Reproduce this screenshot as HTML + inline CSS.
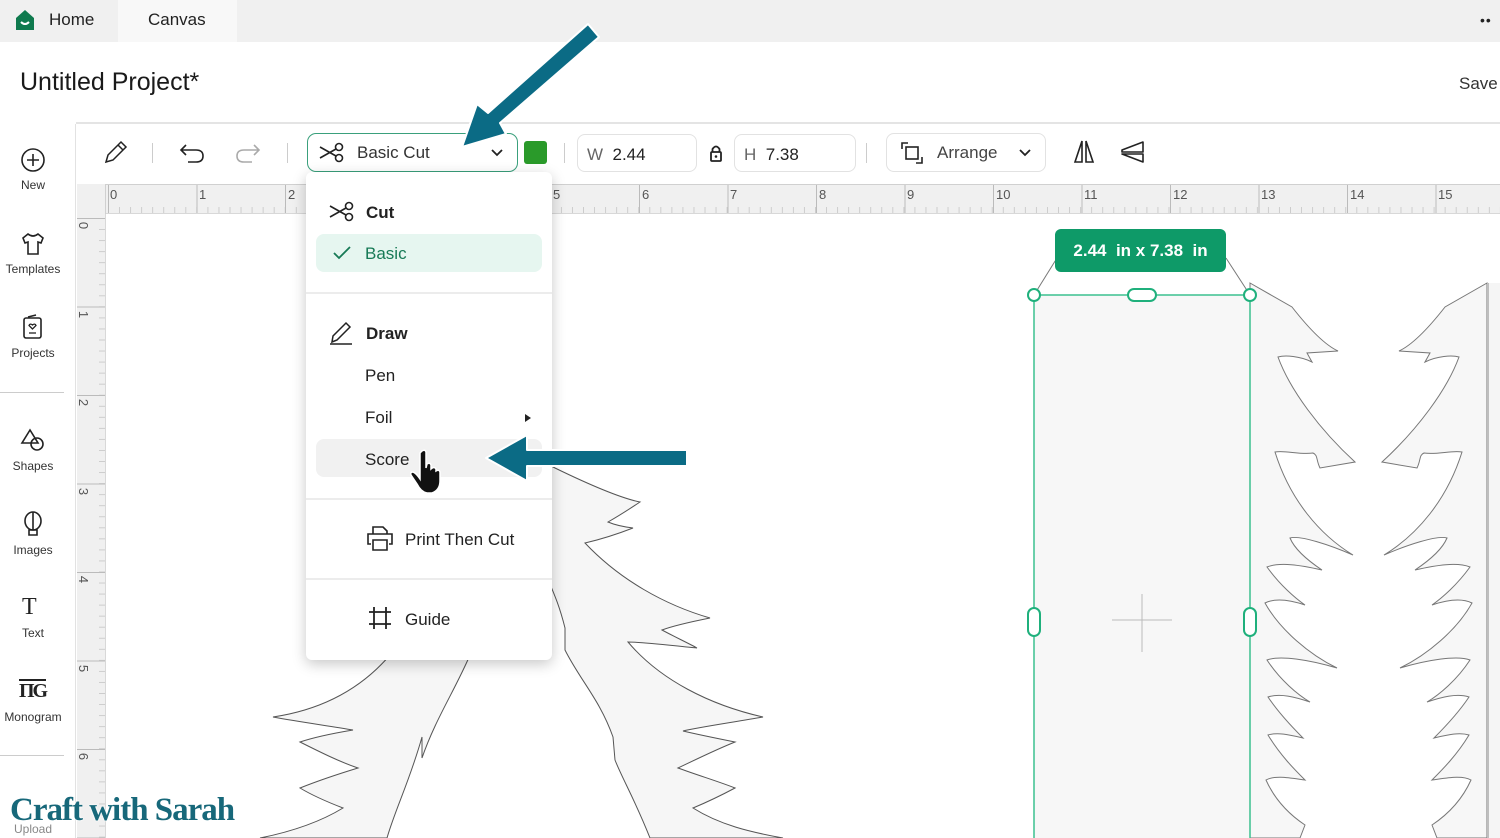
<!DOCTYPE html>
<html><head><meta charset="utf-8"><style>
*{margin:0;padding:0;box-sizing:border-box}
body{width:1500px;height:838px;overflow:hidden;background:#fff;font-family:"Liberation Sans",sans-serif;color:#222;position:relative}
.a{position:absolute}
.tabbar{left:0;top:0;width:1500px;height:42px;background:#f0f0f0}
.sb{left:0;top:124px;width:76px;height:714px;background:#fff;border-right:1px solid #e2e2e2}
.sbi{position:absolute;left:0;width:66px;text-align:center;font-size:12px;color:#333}
.tb{font-size:17px;color:#333}
.menu{left:306px;top:172px;width:246px;height:488px;background:#fff;border-radius:6px;box-shadow:0 4px 14px rgba(0,0,0,.22)}
.mi{position:absolute;font-size:17px;color:#222}
.hr{position:absolute;left:0;width:246px;height:2px;background:#ececec}
</style></head><body>
<!-- canvas drawing -->
<svg class="a" style="left:0;top:0" width="1500" height="838" viewBox="0 0 1500 838">
<rect x="1034" y="295" width="216" height="543" fill="#f7f7f7"/>
<path d="M1250,283 L1292,307 C1310,330 1325,345 1338,351 L1307,353 L1312,362 C1300,356 1285,355 1278,357 C1290,390 1320,430 1355,462 L1320,468 C1316,460 1318,455 1313,453 C1300,455 1285,450 1275,452 C1290,500 1320,535 1353,555 C1330,545 1300,535 1290,538 C1295,550 1310,562 1322,570 C1300,565 1280,562 1267,567 C1280,585 1295,598 1305,605 C1290,600 1275,598 1265,603 C1280,630 1310,655 1337,668 C1310,660 1280,655 1267,660 C1280,680 1298,695 1310,702 C1295,697 1280,693 1268,697 C1280,715 1295,730 1303,738 C1290,735 1278,732 1268,735 C1280,755 1295,770 1305,780 C1290,778 1275,775 1266,780 C1275,800 1290,815 1305,825 L1300,838 L1250,838 Z" fill="#f7f7f7" stroke="#777" stroke-width="1"/>
<path d="M1487,283 L1445,307 C1427,330 1412,345 1399,351 L1430,353 L1425,362 C1437,356 1452,355 1459,357 C1447,390 1417,430 1382,462 L1417,468 C1421,460 1419,455 1424,453 C1437,455 1452,450 1462,452 C1447,500 1417,535 1384,555 C1407,545 1437,535 1447,538 C1442,550 1427,562 1415,570 C1437,565 1457,562 1470,567 C1457,585 1442,598 1432,605 C1447,600 1462,598 1472,603 C1457,630 1427,655 1400,668 C1427,660 1457,655 1470,660 C1457,680 1439,695 1427,702 C1442,697 1457,693 1469,697 C1457,715 1442,730 1434,738 C1447,735 1459,732 1469,735 C1457,755 1442,770 1432,780 C1447,778 1462,775 1471,780 C1462,800 1447,815 1432,825 L1437,838 L1487,838 Z" fill="#f7f7f7" stroke="#777" stroke-width="1"/>
<rect x="1487" y="283" width="13" height="555" fill="#f5f5f5"/>
<line x1="1488" y1="283" x2="1488" y2="838" stroke="#888"/>
<line x1="1034" y1="295" x2="1057" y2="258" stroke="#777"/>
<line x1="1250" y1="295" x2="1226" y2="258" stroke="#777"/>
<rect x="1034" y="295" width="216" height="560" fill="none" stroke="#3cc08f" stroke-width="1.5"/>
<line x1="1112" y1="620" x2="1172" y2="620" stroke="#bbb"/>
<line x1="1142" y1="594" x2="1142" y2="652" stroke="#bbb"/>
<g fill="#fff" stroke="#1fb07c" stroke-width="2">
<circle cx="1034" cy="295" r="6"/><circle cx="1250" cy="295" r="6"/>
<rect x="1128" y="289" width="28" height="12" rx="6"/>
<rect x="1028" y="608" width="12" height="28" rx="6"/><rect x="1244" y="608" width="12" height="28" rx="6"/>
</g>
<g fill="#f6f6f6" stroke="#555" stroke-width="1">
<path d="M390,655 C360,690 320,710 273,717 C300,722 330,726 353,730 C335,733 315,737 300,742 C320,752 340,762 358,768 C335,775 315,782 300,788 C315,797 330,803 343,808 C320,822 290,832 260,838 L387,838 C395,810 410,780 422,737 L422,758 C435,720 455,690 470,655 Z"/>
<path d="M540,460 L555,468 C590,485 620,498 640,502 C628,510 615,518 608,522 C615,525 625,527 633,528 C615,535 598,540 585,543 C620,580 665,605 710,618 C690,622 670,627 662,630 C675,637 688,643 697,648 C675,646 645,642 628,642 C660,680 710,705 763,717 C735,722 700,727 683,731 C700,735 720,739 735,742 C715,750 695,760 678,768 C700,776 720,782 735,788 C720,796 705,803 693,808 C720,825 750,832 783,838 L650,838 C635,800 622,778 615,760 L613,737 C600,700 580,680 565,650 L565,628 C558,600 552,590 540,560 Z"/>
</g>
</svg>

<div class="a tabbar"></div>
<div class="a" style="left:0;top:0;width:117px;height:42px;background:#f0f0f0"></div>
<div class="a" style="left:118px;top:0;width:119px;height:42px;background:#f8f8f8"></div>
<svg class="a" style="left:14px;top:9px" width="22" height="22" viewBox="0 0 22 22"><path d="M2,9 L11,1 L20,9 L20,21 L2,21 Z" fill="#0f7a4e"/><path d="M7,13 Q11,17 15,13" stroke="#fff" stroke-width="2" fill="none"/></svg>
<div class="a" style="left:49px;top:10px;font-size:17px;color:#222">Home</div>
<div class="a" style="left:148px;top:10px;font-size:17px;color:#222">Canvas</div>
<div class="a" style="left:1480px;top:12px;font-size:14px;letter-spacing:1px">••</div>
<div class="a" style="left:20px;top:68px;font-size:25px;color:#1a1a1a">Untitled Project*</div>
<div class="a" style="left:1459px;top:74px;font-size:17px;color:#333">Save</div>
<div class="a" style="left:76px;top:122px;width:1424px;height:2px;background:#e4e4e4"></div>

<div class="a sb"></div>
<svg class="a" style="left:20px;top:147px" width="26" height="26"><circle cx="13" cy="13" r="11" fill="none" stroke="#222" stroke-width="1.6"/><path d="M13,7V19M7,13H19" stroke="#222" stroke-width="1.6"/></svg>
<div class="sbi" style="top:178px">New</div>
<svg class="a" style="left:20px;top:231px" width="26" height="26"><path d="M8,3 L3,7 L5,12 L8,11 L8,23 L18,23 L18,11 L21,12 L23,7 L18,3 Q13,7 8,3Z" fill="none" stroke="#222" stroke-width="1.6"/></svg>
<div class="sbi" style="top:262px">Templates</div>
<svg class="a" style="left:22px;top:314px" width="22" height="26"><rect x="2" y="4" width="17" height="20" rx="2" fill="none" stroke="#222" stroke-width="1.6"/><path d="M6,3L14,1" stroke="#222" stroke-width="1.6"/><path d="M10.5,15 L7,11.5 Q8,9 10.5,11 Q13,9 14,11.5Z" fill="none" stroke="#222" stroke-width="1.3"/><path d="M7,19H14" stroke="#222" stroke-width="1.3"/></svg>
<div class="sbi" style="top:346px">Projects</div>
<div class="a" style="left:0;top:392px;width:64px;height:1px;background:#ccc"></div>
<svg class="a" style="left:20px;top:427px" width="26" height="26"><path d="M10,3 L2,16 L18,16 Z" fill="none" stroke="#222" stroke-width="1.6"/><circle cx="17" cy="17" r="6" fill="none" stroke="#222" stroke-width="1.6"/></svg>
<div class="sbi" style="top:459px">Shapes</div>
<svg class="a" style="left:22px;top:511px" width="22" height="26"><ellipse cx="11" cy="10" rx="8" ry="9" fill="none" stroke="#222" stroke-width="1.6"/><path d="M11,1V19M7,19H15V24H7Z" fill="none" stroke="#222" stroke-width="1.6"/></svg>
<div class="sbi" style="top:543px">Images</div>
<div class="a" style="left:22px;top:594px;font-family:'Liberation Serif',serif;font-size:24px;color:#222">T</div>
<div class="sbi" style="top:626px">Text</div>
<div class="a" style="left:19px;top:679px;font-family:'Liberation Serif',serif;font-size:20px;font-weight:bold;letter-spacing:-2px;border-top:2px solid #222;line-height:20px">ΠG</div>
<div class="sbi" style="top:710px">Monogram</div>
<div class="a" style="left:0;top:755px;width:64px;height:1px;background:#ccc"></div>
<div class="sbi" style="top:822px;color:#888">Upload</div>

<svg class="a" style="left:102px;top:140px" width="26" height="26"><path d="M4,22 L6,15 L19,2 L24,7 L11,20 Z M16,5 L21,10" fill="none" stroke="#222" stroke-width="1.5"/></svg>
<div class="a" style="left:152px;top:143px;width:1px;height:20px;background:#ccc"></div>
<svg class="a" style="left:178px;top:141px" width="28" height="24"><path d="M8,4 L3,9 L8,14 M3,9 H18 Q25,9 25,15 Q25,21 18,21 H10" fill="none" stroke="#222" stroke-width="1.6"/></svg>
<svg class="a" style="left:234px;top:141px" width="28" height="24"><path d="M20,4 L25,9 L20,14 M25,9 H10 Q3,9 3,15 Q3,21 10,21 H18" fill="none" stroke="#aaa" stroke-width="1.6"/></svg>
<div class="a" style="left:287px;top:143px;width:1px;height:20px;background:#ccc"></div>
<div class="a" style="left:307px;top:133px;width:211px;height:39px;border:1.5px solid #3aa07c;border-radius:9px;background:#fff"></div>
<svg class="a" style="left:318px;top:142px" width="28" height="22"><circle cx="21" cy="5" r="3.5" fill="none" stroke="#222" stroke-width="1.6"/><circle cx="21" cy="16" r="3.5" fill="none" stroke="#222" stroke-width="1.6"/><path d="M2,5 L18,14 M2,16 L18,7" stroke="#222" stroke-width="1.6"/></svg>
<div class="a tb" style="left:357px;top:143px">Basic Cut</div>
<svg class="a" style="left:490px;top:148px" width="14" height="10"><path d="M2,2 L7,7 L12,2" fill="none" stroke="#222" stroke-width="1.8"/></svg>
<div class="a" style="left:524px;top:141px;width:23px;height:23px;background:#2a9a2a;border-radius:3px"></div>
<div class="a" style="left:564px;top:143px;width:1px;height:20px;background:#ccc"></div>
<div class="a" style="left:577px;top:134px;width:120px;height:38px;border:1px solid #e2e2e2;border-radius:8px"></div>
<div class="a tb" style="left:587px;top:145px;color:#666">W&nbsp;&nbsp;<span style="color:#222">2.44</span></div>
<svg class="a" style="left:709px;top:144px" width="14" height="18"><path d="M3.5,8 V5 Q7,0 10.5,5 V8" fill="none" stroke="#222" stroke-width="1.8"/><rect x="2" y="8" width="10" height="9" rx="1" fill="none" stroke="#222" stroke-width="1.8"/><circle cx="7" cy="12.5" r="1.3" fill="#222"/></svg>
<div class="a" style="left:734px;top:134px;width:122px;height:38px;border:1px solid #e2e2e2;border-radius:8px"></div>
<div class="a tb" style="left:744px;top:145px;color:#666">H&nbsp;&nbsp;<span style="color:#222">7.38</span></div>
<div class="a" style="left:866px;top:143px;width:1px;height:20px;background:#ccc"></div>
<div class="a" style="left:886px;top:133px;width:160px;height:39px;border:1px solid #e2e2e2;border-radius:8px"></div>
<svg class="a" style="left:900px;top:141px" width="24" height="24"><path d="M2,8 V2 H8 M16,22 H22 V16" fill="none" stroke="#222" stroke-width="1.6"/><rect x="6" y="6" width="12" height="12" fill="none" stroke="#222" stroke-width="1.6"/></svg>
<div class="a tb" style="left:937px;top:143px;color:#444">Arrange</div>
<svg class="a" style="left:1018px;top:148px" width="14" height="10"><path d="M2,2 L7,7 L12,2" fill="none" stroke="#222" stroke-width="1.8"/></svg>
<svg class="a" style="left:1072px;top:139px" width="24" height="26"><path d="M10,2 L3,23 H10Z M14,2 L21,23 H14Z" fill="none" stroke="#222" stroke-width="1.6"/></svg>
<svg class="a" style="left:1120px;top:140px" width="26" height="24"><path d="M23,2 L2,10 V12 H23Z M23,22 L2,14 H23Z" fill="none" stroke="#222" stroke-width="1.6" stroke-linejoin="round"/></svg>

<div class="a" style="left:77px;top:184px;width:1423px;height:30px;background-color:#f0f0f0;border-top:1px solid #d0d0d0;border-bottom:1px solid #d8d8d8;
background-image:linear-gradient(90deg,#bbb 1px,transparent 1px),linear-gradient(90deg,#ccc 1px,transparent 1px);
background-size:88.5px 100%,11.06px 6px;background-position:31px 0,31px 22px;background-repeat:repeat-x,repeat-x"></div>
<div class="a" style="left:77px;top:214px;width:29px;height:624px;background-color:#f0f0f0;border-right:1px solid #d8d8d8;
background-image:linear-gradient(180deg,#bbb 1px,transparent 1px),linear-gradient(180deg,#ccc 1px,transparent 1px);
background-size:100% 88.5px,6px 11.06px;background-position:0 4px,22px 4px;background-repeat:repeat-y,repeat-y"></div>
<div class="a" style="left:77px;top:184px;width:29px;height:30px;background:#f0f0f0;border-right:1px solid #d0d0d0"></div>
<div class="a" style="left:110px;top:187px;font-size:13px;color:#555">
<span class="a" style="left:0">0</span><span class="a" style="left:89px">1</span><span class="a" style="left:178px">2</span><span class="a" style="left:443px">5</span><span class="a" style="left:532px">6</span><span class="a" style="left:620px">7</span><span class="a" style="left:709px">8</span><span class="a" style="left:797px">9</span><span class="a" style="left:886px">10</span><span class="a" style="left:974px">11</span><span class="a" style="left:1063px">12</span><span class="a" style="left:1151px">13</span><span class="a" style="left:1240px">14</span><span class="a" style="left:1328px">15</span></div>
<div class="a" style="left:80px;top:218px;font-size:13px;color:#555">
<span class="a" style="top:0;transform:rotate(90deg)">0</span><span class="a" style="top:89px;transform:rotate(90deg)">1</span><span class="a" style="top:177px;transform:rotate(90deg)">2</span><span class="a" style="top:266px;transform:rotate(90deg)">3</span><span class="a" style="top:354px;transform:rotate(90deg)">4</span><span class="a" style="top:443px;transform:rotate(90deg)">5</span><span class="a" style="top:531px;transform:rotate(90deg)">6</span></div>

<div class="a menu">
<svg class="a" style="left:22px;top:29px" width="28" height="22"><circle cx="21" cy="5" r="3.5" fill="none" stroke="#222" stroke-width="1.6"/><circle cx="21" cy="16" r="3.5" fill="none" stroke="#222" stroke-width="1.6"/><path d="M2,5 L18,14 M2,16 L18,7" stroke="#222" stroke-width="1.6"/></svg>
<div class="mi" style="left:60px;top:31px;font-weight:bold">Cut</div>
<div class="a" style="left:10px;top:62px;width:226px;height:38px;background:#e6f6f0;border-radius:8px"></div>
<svg class="a" style="left:26px;top:73px" width="20" height="16"><path d="M2,8 L7,13 L18,2" fill="none" stroke="#177a56" stroke-width="1.8"/></svg>
<div class="mi" style="left:59px;top:72px;color:#177a56">Basic</div>
<div class="hr" style="top:120px"></div>
<svg class="a" style="left:22px;top:148px" width="26" height="26"><path d="M2,24 H24 M4,22 L5,16 L18,3 L22,7 L9,20 Z" fill="none" stroke="#222" stroke-width="1.5"/></svg>
<div class="mi" style="left:60px;top:152px;font-weight:bold">Draw</div>
<div class="mi" style="left:59px;top:194px">Pen</div>
<div class="mi" style="left:59px;top:236px">Foil</div>
<div class="a" style="left:219px;top:242px;width:0;height:0;border-left:6px solid #222;border-top:4px solid transparent;border-bottom:4px solid transparent"></div>
<div class="a" style="left:10px;top:267px;width:226px;height:38px;background:#f1f1f1;border-radius:8px"></div>
<div class="mi" style="left:59px;top:278px">Score</div>
<div class="hr" style="top:326px"></div>
<svg class="a" style="left:60px;top:352px" width="28" height="28"><path d="M7,10 V3 H17 L21,7 V10 M5,20 H2 V10 H26 V20 H23 M7,16 H21 V26 H7Z" fill="none" stroke="#222" stroke-width="1.6"/></svg>
<div class="mi" style="left:99px;top:358px">Print Then Cut</div>
<div class="hr" style="top:406px"></div>
<svg class="a" style="left:62px;top:434px" width="24" height="24"><path d="M6,1V23 M18,1V23 M1,6H23 M1,18H23" stroke="#222" stroke-width="1.8"/></svg>
<div class="mi" style="left:99px;top:438px">Guide</div>
</div>
<svg class="a" style="left:408px;top:448px" width="40" height="48"><path d="M14,3 Q17,1 18,4 V20 L19,16 Q22,14 23,17 V21 Q26,18 28,21 V23 Q31,21 32,24 V33 Q32,42 24,45 H19 Q13,44 9,36 L3,27 Q2,24 5,24 Q8,25 12,31 V5 Z" fill="#111" stroke="#fff" stroke-width="1.5"/></svg>

<div class="a" style="left:1055px;top:229px;width:171px;height:43px;background:#0e9a68;border-radius:6px;color:#fff;font-weight:bold;font-size:17px;text-align:center;line-height:43px">2.44&nbsp; in x 7.38&nbsp; in</div>

<!-- arrows on top -->
<svg class="a" style="left:0;top:0" width="1500" height="838" viewBox="0 0 1500 838">
<g fill="#0b6b85" stroke="#fff" stroke-width="2" stroke-linejoin="round">
<path d="M588,24 L599,37 L500,123 L506,134 L462,147 L477,104 L488,113 Z"/>
<path d="M687,450 L687,466 L527,466 L527,481 L486,458 L527,435 L527,450 Z"/>
</g>
</svg>

<div class="a" style="left:10px;top:792px;font-family:'Liberation Serif',serif;font-weight:bold;font-size:33px;color:#17687a;letter-spacing:-1px;text-shadow:0 0 2px #fff,0 0 2px #fff">Craft with Sarah</div>
</body></html>
